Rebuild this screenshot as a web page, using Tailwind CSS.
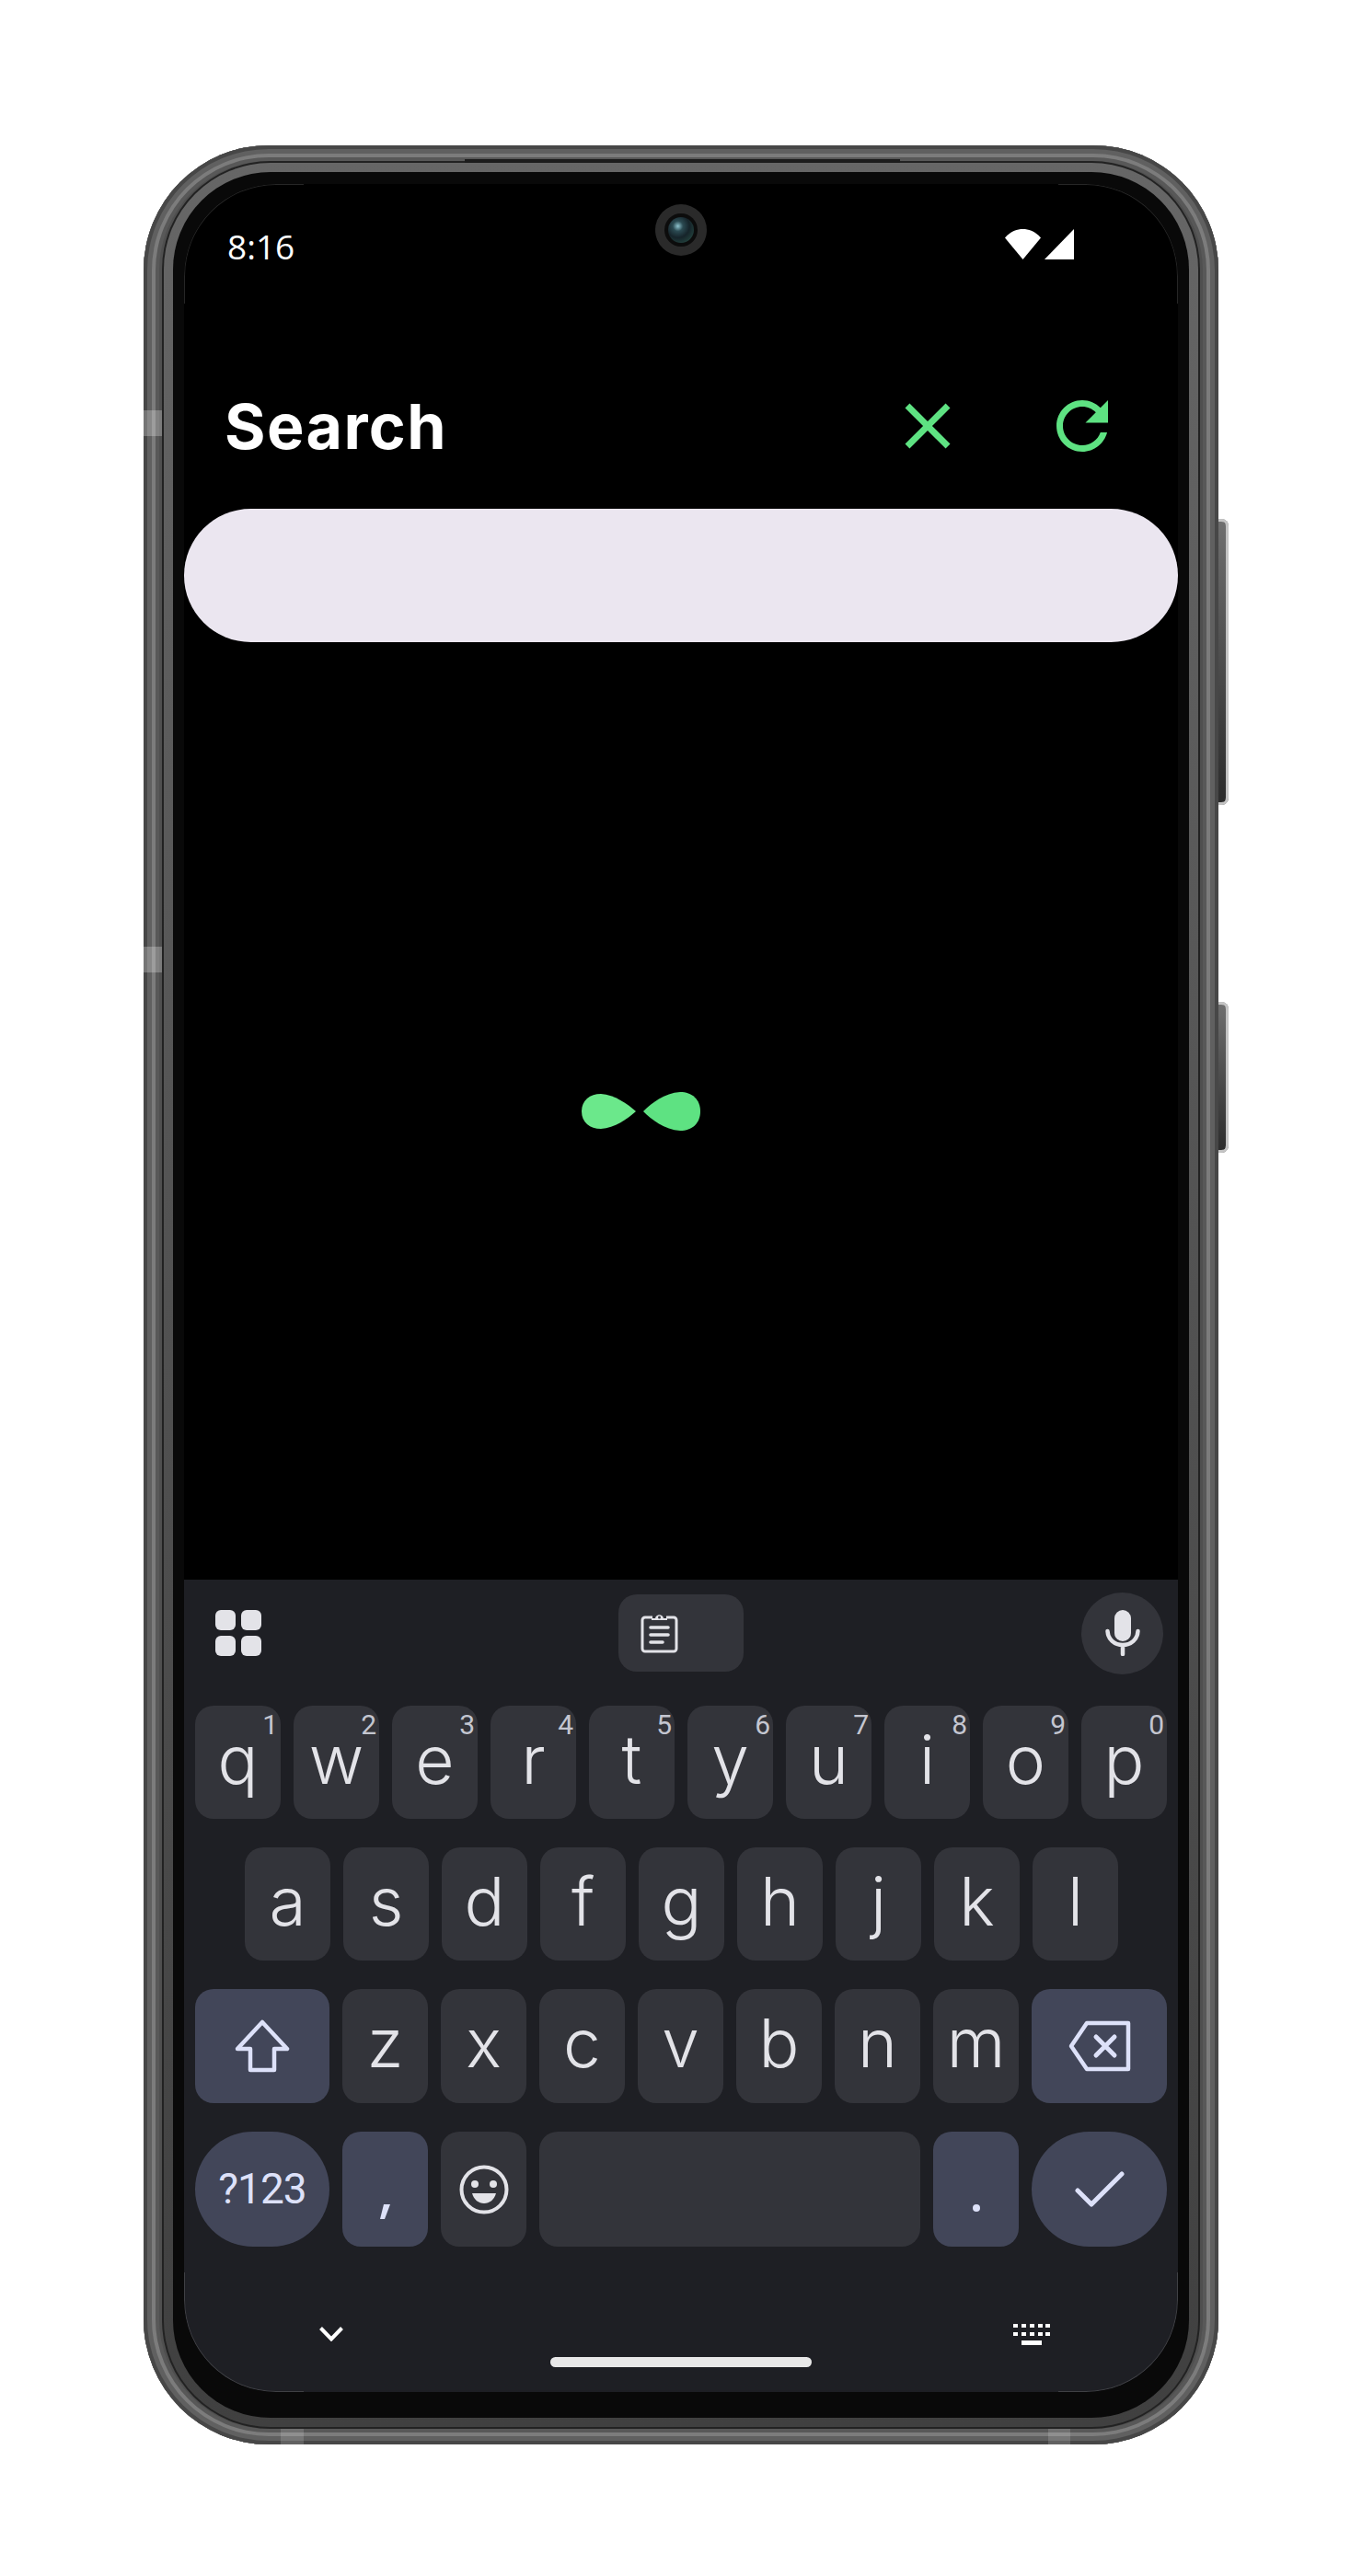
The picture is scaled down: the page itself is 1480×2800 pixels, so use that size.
<!DOCTYPE html>
<html lang="en">
  <head>
    <meta charset="UTF-8" />
    <title>Search</title>
    <script src="https://cdn.jsdelivr.net/npm/@tailwindcss/browser@4"></script>
  </head>
  <body class="bg-white w-[1480px] h-[2800px] overflow-hidden font-['Roboto',sans-serif]">
    <div class="pt-[158px] pl-[156px]">
      <!-- device frame -->
      <div class="relative w-[1168px] h-[2499px] rounded-[136px] bg-[#4f4f4f] pt-[17px] px-[20px] pb-[17px] shadow-[inset_0_0_0_4px_#474747,inset_0_0_0_9px_#606060,inset_0_0_0_13px_#7c7c7c,inset_0_0_0_17px_#585858]">
        <!-- side buttons -->
        <div class="absolute left-[1168px] top-[406px] w-[11px] h-[311px] rounded-r-[8px] bg-gradient-to-b from-[#707070] to-[#2c2c2c] shadow-[inset_-3px_0_0_#c4c4c4,inset_0_3px_0_#c4c4c4,inset_0_-3px_0_#c4c4c4]"></div>
        <div class="absolute left-[1168px] top-[931px] w-[11px] h-[164px] rounded-r-[8px] bg-gradient-to-b from-[#707070] to-[#2c2c2c] shadow-[inset_-3px_0_0_#c4c4c4,inset_0_3px_0_#c4c4c4,inset_0_-3px_0_#c4c4c4]"></div>
        <!-- antenna bands -->
        <div class="absolute left-0 top-[288px] w-[20px] h-[28px] bg-white/25"></div>
        <div class="absolute left-0 top-[871px] w-[20px] h-[28px] bg-white/25"></div>
        <div class="absolute left-[149px] bottom-0 w-[25px] h-[17px] bg-white/15"></div>
        <div class="absolute left-[983px] bottom-0 w-[24px] h-[17px] bg-white/15"></div>
        <!-- top seam -->
        <div class="absolute left-[349px] top-[15px] w-[473px] h-[4px] bg-[#1c1c1c]"></div>

        <div class="rounded-[118px] bg-[#222] p-[2px] h-full">
          <div class="rounded-[116px] bg-gradient-to-b from-[#666] via-[#525252] to-[#404040] h-full p-[10px]">
            <div class="rounded-[106px] bg-[#090909] h-full px-[12px] pt-[13px] pb-[28px]">
              <!-- screen -->
              <div class="relative w-[1080px] h-[2400px] rounded-[100px] bg-black overflow-hidden flex flex-col text-white">
                <!-- status bar -->
                <div class="h-[115px] pl-[47px] pr-[113px] pt-[46px] flex justify-between items-start">
                  <span class="text-[37px] leading-[44px] font-['Open_Sans',sans-serif]">8:16</span>
                  <div class="flex items-start gap-[4px] pt-[3px]">
                    <svg width="39" height="33" viewBox="0 0 39 33"><path d="M0 9.5C5 3.5 12 0 19.5 0S34 3.5 39 9.5L19.5 33z" fill="#fff"/></svg>
                    <svg width="32" height="33" viewBox="0 0 32 33"><path d="M32 0V33H0z" fill="#fff"/></svg>
                  </div>
                </div>
                <!-- camera -->
                <div class="absolute left-[512px] top-[22px] w-[56px] h-[56px] rounded-full bg-[#2a2a2a] flex items-center justify-center">
                  <div class="w-[36px] h-[36px] rounded-full bg-[#0c0c0c] flex items-center justify-center">
                    <div class="w-[28px] h-[28px] rounded-full bg-[radial-gradient(circle_at_38%_35%,#8fc4cf_0,#2b4a52_22%,#16242a_50%,#22403c_78%,#0f1a1c_100%)]"></div>
                  </div>
                </div>
                <!-- header -->
                <div class="h-[238px] flex items-start pl-[44px] pr-[62px] pt-[106px]">
                  <h1 class="flex-1 text-[68px] leading-[84px] font-bold tracking-[1.4px] font-['Inter',sans-serif]">Search</h1>
                  <button class="w-[84px] h-[84px] mr-[84px]">
                    <svg width="84" height="84" viewBox="0 0 24 24" fill="#5ee282"><path d="M19 6.41L17.59 5 12 10.59 6.41 5 5 6.41 10.59 12 5 17.59 6.41 19 12 13.41 17.59 19 19 17.59 13.41 12z"/></svg>
                  </button>
                  <button class="w-[84px] h-[84px]">
                    <svg width="84" height="84" viewBox="0 0 24 24" fill="#5ee282"><path d="M17.65 6.35C16.2 4.9 14.21 4 12 4c-4.42 0-7.99 3.58-7.99 8s3.57 8 7.99 8c3.73 0 6.84-2.55 7.73-6h-2.08c-.82 2.33-3.04 4-5.65 4-3.31 0-6-2.69-6-6s2.69-6 6-6c1.66 0 3.14.69 4.22 1.78L13 11h7V4l-2.35 2.35z"/></svg>
                  </button>
                </div>
                <!-- search field -->
                <div class="h-[145px] rounded-full bg-[#ebe6f0] shrink-0"></div>
                <!-- loading -->
                <div class="h-[1019px] pl-[432px] pt-[489px]">
                  <svg width="130" height="42" viewBox="0 0 130 42">
                    <path d="M0 21C0 9 9 2 21 2C36 3 50 13 59 21C50 29 36 39 21 40C9 40 0 33 0 21z" fill="#6be88b"/>
                    <path d="M129 21C129 8 120 0 107 0C90 1 76 12 67 21C76 30 90 41 107 42C120 42 129 34 129 21z" fill="#5ee282"/>
                  </svg>
                </div>
                <!-- keyboard -->
                <div class="flex-1 bg-[#1e1f24] px-[12px] flex flex-col font-['Inter',sans-serif] text-[#e3e3e8]">
                  <div class="h-[137px] pb-[21px] flex items-center shrink-0">
                    <div class="ml-[22px] grid grid-cols-2 gap-x-[6px] gap-y-[6px] w-[50px]">
                      <div class="h-[22px] rounded-[6px] bg-[#e3e3e8]"></div>
                      <div class="h-[22px] rounded-[6px] bg-[#e3e3e8]"></div>
                      <div class="h-[22px] rounded-[6px] bg-[#e3e3e8]"></div>
                      <div class="h-[22px] rounded-[6px] bg-[#e3e3e8]"></div>
                    </div>
                    <div class="ml-[388px] w-[136px] h-[84px] rounded-[20px] bg-[#33343a] flex items-center pl-[24px]">
                      <svg width="41" height="44" viewBox="0 0 41 44" fill="none" stroke="#e3e3e8">
                        <path d="M13 5H5a3 3 0 0 0-3 3V39a3 3 0 0 0 3 3H36a3 3 0 0 0 3-3V8a3 3 0 0 0-3-3H28" stroke-width="3"/>
                        <path d="M12 8V6H16C17 1 24 1 25 6H29V8z" fill="#e3e3e8" stroke="none"/>
                        <circle cx="20.5" cy="5" r="1.5" fill="#33343a" stroke="none"/>
                        <path d="M11 16H30M11 24H30M11 32H24" stroke-width="3.6" stroke-linecap="round"/>
                      </svg>
                    </div>
                    <div class="ml-auto mr-[4px] w-[89px] h-[89px] rounded-full bg-[#33343a] flex items-center justify-center">
                      <svg width="38" height="50" viewBox="0 0 38 50" fill="none">
                        <rect x="10" y="0" width="18" height="34" rx="9" fill="#e3e3e8"/>
                        <path d="M2.5 23C3 32 10 38 19 38S35 32 35.500 23M19 38V48" stroke="#e3e3e8" stroke-width="4.500" stroke-linecap="round"/>
                      </svg>
                    </div>
                  </div>
                  <div class="flex flex-col gap-[31px]">
                    <!-- row 1 -->
                    <div class="flex gap-[14px] h-[123px] text-[73px] font-[350]">
                      <div class="relative w-[93px] rounded-[20px] bg-[#33343a] flex items-center justify-center pb-[6px]">q<span class="absolute right-[3px] top-[3px] text-[30px] leading-[36px] font-normal text-[#c4c6d0] font-['Roboto',sans-serif]">1</span></div>
                      <div class="relative w-[93px] rounded-[20px] bg-[#33343a] flex items-center justify-center pb-[6px]">w<span class="absolute right-[3px] top-[3px] text-[30px] leading-[36px] font-normal text-[#c4c6d0] font-['Roboto',sans-serif]">2</span></div>
                      <div class="relative w-[93px] rounded-[20px] bg-[#33343a] flex items-center justify-center pb-[6px]">e<span class="absolute right-[3px] top-[3px] text-[30px] leading-[36px] font-normal text-[#c4c6d0] font-['Roboto',sans-serif]">3</span></div>
                      <div class="relative w-[93px] rounded-[20px] bg-[#33343a] flex items-center justify-center pb-[6px]">r<span class="absolute right-[3px] top-[3px] text-[30px] leading-[36px] font-normal text-[#c4c6d0] font-['Roboto',sans-serif]">4</span></div>
                      <div class="relative w-[93px] rounded-[20px] bg-[#33343a] flex items-center justify-center pb-[6px]">t<span class="absolute right-[3px] top-[3px] text-[30px] leading-[36px] font-normal text-[#c4c6d0] font-['Roboto',sans-serif]">5</span></div>
                      <div class="relative w-[93px] rounded-[20px] bg-[#33343a] flex items-center justify-center pb-[6px]">y<span class="absolute right-[3px] top-[3px] text-[30px] leading-[36px] font-normal text-[#c4c6d0] font-['Roboto',sans-serif]">6</span></div>
                      <div class="relative w-[93px] rounded-[20px] bg-[#33343a] flex items-center justify-center pb-[6px]">u<span class="absolute right-[3px] top-[3px] text-[30px] leading-[36px] font-normal text-[#c4c6d0] font-['Roboto',sans-serif]">7</span></div>
                      <div class="relative w-[93px] rounded-[20px] bg-[#33343a] flex items-center justify-center pb-[6px]">i<span class="absolute right-[3px] top-[3px] text-[30px] leading-[36px] font-normal text-[#c4c6d0] font-['Roboto',sans-serif]">8</span></div>
                      <div class="relative w-[93px] rounded-[20px] bg-[#33343a] flex items-center justify-center pb-[6px]">o<span class="absolute right-[3px] top-[3px] text-[30px] leading-[36px] font-normal text-[#c4c6d0] font-['Roboto',sans-serif]">9</span></div>
                      <div class="relative w-[93px] rounded-[20px] bg-[#33343a] flex items-center justify-center pb-[6px]">p<span class="absolute right-[3px] top-[3px] text-[30px] leading-[36px] font-normal text-[#c4c6d0] font-['Roboto',sans-serif]">0</span></div>
                    </div>
                    <!-- row 2 -->
                    <div class="flex gap-[14px] h-[123px] text-[73px] font-[350] pl-[54px]">
                      <div class="w-[93px] rounded-[20px] bg-[#33343a] flex items-center justify-center pb-[6px]">a</div>
                      <div class="w-[93px] rounded-[20px] bg-[#33343a] flex items-center justify-center pb-[6px]">s</div>
                      <div class="w-[93px] rounded-[20px] bg-[#33343a] flex items-center justify-center pb-[6px]">d</div>
                      <div class="w-[93px] rounded-[20px] bg-[#33343a] flex items-center justify-center pb-[6px]">f</div>
                      <div class="w-[93px] rounded-[20px] bg-[#33343a] flex items-center justify-center pb-[6px]">g</div>
                      <div class="w-[93px] rounded-[20px] bg-[#33343a] flex items-center justify-center pb-[6px]">h</div>
                      <div class="w-[93px] rounded-[20px] bg-[#33343a] flex items-center justify-center pb-[6px]">j</div>
                      <div class="w-[93px] rounded-[20px] bg-[#33343a] flex items-center justify-center pb-[6px]">k</div>
                      <div class="w-[93px] rounded-[20px] bg-[#33343a] flex items-center justify-center pb-[6px]">l</div>
                    </div>
                    <!-- row 3 -->
                    <div class="flex gap-[14px] h-[124px] text-[73px] font-[350]">
                      <div class="w-[146px] rounded-[20px] bg-[#424659] flex items-center justify-center">
                        <svg width="60" height="58" viewBox="0 0 60 58" fill="none" stroke="#dde1f9" stroke-width="4.500" stroke-linejoin="round"><path d="M30 3L57 32H43V55H17V32H3z"/></svg>
                      </div>
                      <div class="w-[93px] rounded-[20px] bg-[#33343a] flex items-center justify-center pb-[6px]">z</div>
                      <div class="w-[93px] rounded-[20px] bg-[#33343a] flex items-center justify-center pb-[6px]">x</div>
                      <div class="w-[93px] rounded-[20px] bg-[#33343a] flex items-center justify-center pb-[6px]">c</div>
                      <div class="w-[93px] rounded-[20px] bg-[#33343a] flex items-center justify-center pb-[6px]">v</div>
                      <div class="w-[93px] rounded-[20px] bg-[#33343a] flex items-center justify-center pb-[6px]">b</div>
                      <div class="w-[93px] rounded-[20px] bg-[#33343a] flex items-center justify-center pb-[6px]">n</div>
                      <div class="w-[93px] rounded-[20px] bg-[#33343a] flex items-center justify-center pb-[6px]">m</div>
                      <div class="w-[147px] rounded-[20px] bg-[#424659] flex items-center justify-center">
                        <svg width="68" height="56" viewBox="0 0 68 56" fill="none" stroke="#dde1f9" stroke-width="4.500" stroke-linejoin="round" stroke-linecap="round"><path d="M20 3H65V53H20L3 28z"/><path d="M30 18L50 38M50 18L30 38" stroke-width="5"/></svg>
                      </div>
                    </div>
                    <!-- row 4 -->
                    <div class="flex gap-[14px] h-[125px]">
                      <div class="w-[146px] rounded-full bg-[#424659] text-[#dde1f9] flex items-center justify-center text-[46px] tracking-[-1px] font-['Roboto',sans-serif]">?123</div>
                      <div class="w-[93px] rounded-[20px] bg-[#424659] flex items-end justify-center pb-[30px]">
                        <svg width="11" height="16" viewBox="0 0 11 16"><path d="M4 0H11L5 16H0z" fill="#dde1f9"/></svg>
                      </div>
                      <div class="w-[93px] rounded-[20px] bg-[#33343a] flex items-center justify-center">
                        <svg width="54" height="54" viewBox="0 0 54 54" fill="none"><circle cx="27" cy="27" r="24.500" stroke="#e3e3e8" stroke-width="4"/><circle cx="17" cy="21" r="4" fill="#e3e3e8"/><circle cx="37" cy="21" r="4" fill="#e3e3e8"/><path d="M14 31H40C38 38 33 42 27 42S16 38 14 31z" fill="#e3e3e8"/></svg>
                      </div>
                      <div class="w-[414px] rounded-[20px] bg-[#33343a]"></div>
                      <div class="w-[93px] rounded-[20px] bg-[#424659] flex items-end justify-center pb-[38px]">
                        <div class="w-[8px] h-[8px] rounded-full bg-[#dde1f9]"></div>
                      </div>
                      <div class="w-[147px] rounded-full bg-[#424659] flex items-center justify-center">
                        <svg width="54" height="40" viewBox="0 0 54 40" fill="none"><path d="M3 21L18 36L51 3" stroke="#dde1f9" stroke-width="5" stroke-linecap="round" stroke-linejoin="round"/></svg>
                      </div>
                    </div>
                  </div>
                  <!-- nav bar -->
                  <div class="relative flex-1">
                    <svg class="absolute left-[135px] top-[87px]" width="26" height="16" viewBox="0 0 26 16" fill="none"><path d="M1.500 1.500L13 13.500L24.500 1.500" stroke="#fff" stroke-width="4"/></svg>
                    <div class="absolute left-[386px] top-[120px] w-[284px] h-[11px] rounded-full bg-[#e8e8e8]"></div>
                    <svg class="absolute left-[889px] top-[84px]" width="40" height="23" viewBox="0 0 40 23" fill="#fff">
                      <path d="M0 0h5v4H0zM9 0h5v4H9zM18 0h5v4h-5zM27 0h5v4h-5zM35 0h5v4h-5zM0 9h5v4H0zM9 9h5v4H9zM18 9h5v4h-5zM27 9h5v4h-5zM35 9h5v4h-5zM9 18h22v5H9z"/>
                    </svg>
                  </div>
                </div>
                <!-- corner hairlines -->
                <div class="absolute left-0 top-0 w-[130px] h-[130px] rounded-tl-[100px] border-t border-l border-white/15"></div>
                <div class="absolute right-0 top-0 w-[130px] h-[130px] rounded-tr-[100px] border-t border-r border-white/15"></div>
                <div class="absolute left-0 bottom-0 w-[130px] h-[130px] rounded-bl-[100px] border-b border-l border-white/15"></div>
                <div class="absolute right-0 bottom-0 w-[130px] h-[130px] rounded-br-[100px] border-b border-r border-white/15"></div>
              </div>
            </div>
          </div>
        </div>
      </div>
    </div>
  </body>
</html>
